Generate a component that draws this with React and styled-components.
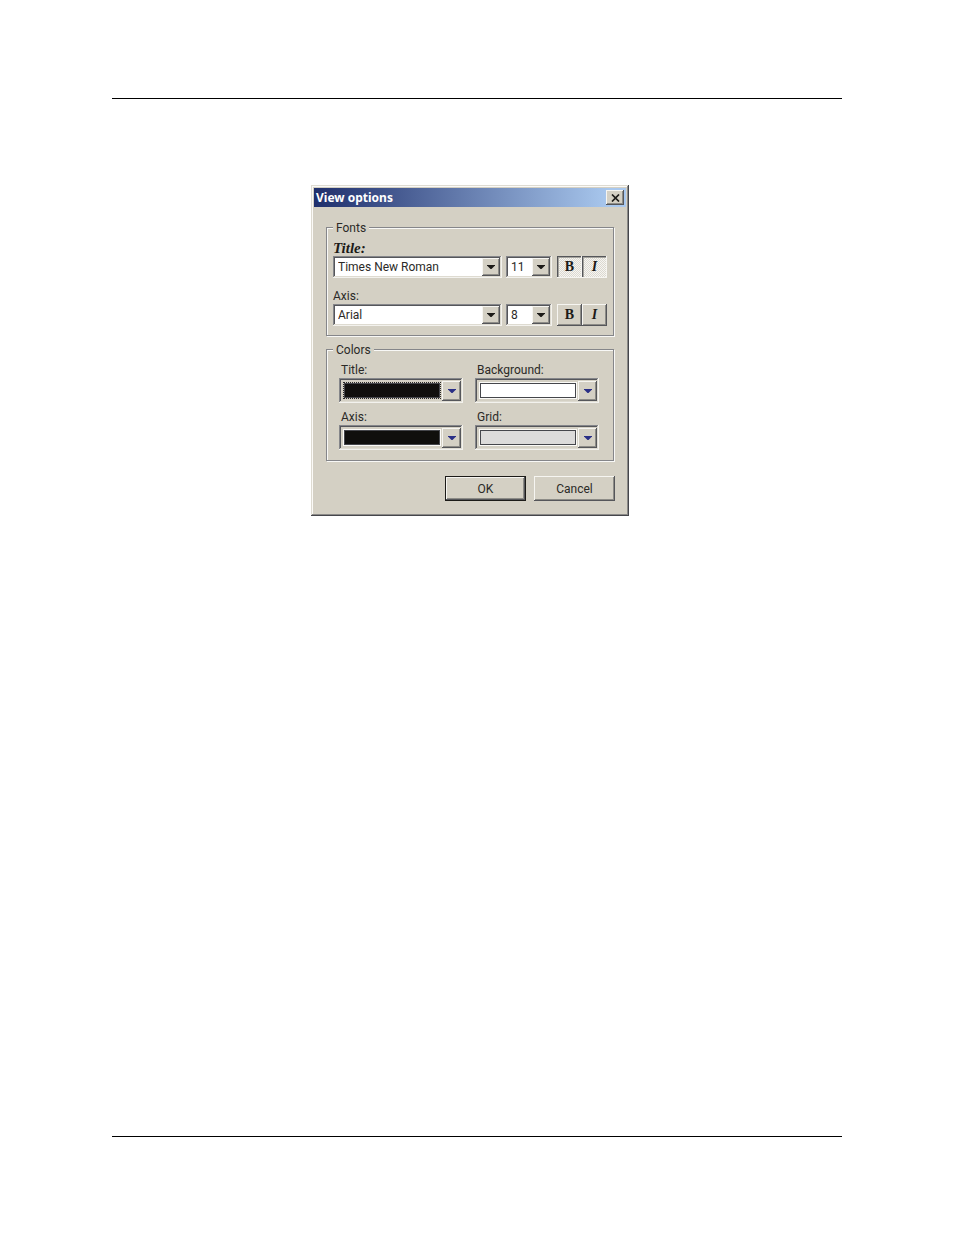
import React, { useState } from "react";
import styled, { createGlobalStyle, css } from "styled-components";

const swatches = [
  { value: "#100f0d", name: "Black" },
  { value: "#ffffff", name: "White" },
  { value: "#dcdbda", name: "Light gray" },
];

function Arrow({ color }) {
  return (
    <svg width="8" height="4" viewBox="0 0 8 4" aria-hidden="true">
      <path d="M0 0h8v0.5L4.5 4h-1L0 0.5z" fill={color} />
    </svg>
  );
}

function Combo({ label, options, initial, className }) {
  const [value, setValue] = useState(initial);

  return (
    <Combowrap className={className}>
      <select aria-label={label} value={value} onChange={(e) => setValue(e.target.value)}>
        {options.map((option) => (
          <option key={option}>{option}</option>
        ))}
      </select>
      <Arrowbox>
        <Arrow color="#1c1b18" />
      </Arrowbox>
    </Combowrap>
  );
}

function Toggle({ label, initial, italic, children }) {
  const [on, setOn] = useState(initial);

  return (
    <Togglebutton type="button" aria-label={label} aria-pressed={on} $on={on} $italic={italic} onClick={() => setOn(!on)}>
      {children}
    </Togglebutton>
  );
}

function FontRow({ name, font, size, on }) {
  return (
    <Fontrow>
      <Combo className="family" label={`${name} font`} options={["Times New Roman", "Arial"]} initial={font} />
      <Combo className="size" label={`${name} size`} options={["8", "11"]} initial={size} />
      <div className="toggles">
        <Toggle label={`${name} bold`} initial={on}>
          B
        </Toggle>
        <Toggle label={`${name} italic`} initial={on} italic>
          I
        </Toggle>
      </div>
    </Fontrow>
  );
}

function ColorField({ id, label, initial, focused }) {
  const [color, setColor] = useState(initial);

  return (
    <Colorfield>
      <label htmlFor={id}>{label}</label>
      <Colorcombo>
        <Swatch $color={color} $focused={focused} />
        <Arrowbox>
          <Arrow color="#2a2f86" />
        </Arrowbox>
        <select id={id} value={color} onChange={(e) => setColor(e.target.value)}>
          {swatches.map(({ value, name }) => (
            <option key={value} value={value} aria-label={name} />
          ))}
        </select>
      </Colorcombo>
    </Colorfield>
  );
}

function App() {
  return (
    <Page>
      <GlobalStyle />
      <Rule />
      <Content>
        <Dialog role="dialog" aria-labelledby="dialog-title">
          <Titlebar>
            <h1 id="dialog-title">View options</h1>
            <Closebutton type="button" aria-label="Close">
              <svg width="9" height="8" viewBox="0 0 9 8" aria-hidden="true">
                <path d="M1 0.5L8 7.5M8 0.5L1 7.5" stroke="#1c1b18" strokeWidth="1.7" />
              </svg>
            </Closebutton>
          </Titlebar>
          <Dialogbody>
            <Fontgroup>
              <legend>Fonts</legend>
              <Titlesample>Title:</Titlesample>
              <FontRow name="Title" font="Times New Roman" size="11" on={true} />
              <Axissample>Axis:</Axissample>
              <FontRow name="Axis" font="Arial" size="8" on={false} />
            </Fontgroup>
            <Colorgroup>
              <legend>Colors</legend>
              <div className="fields">
                <ColorField id="title-color" label="Title:" initial="#100f0d" focused />
                <ColorField id="background-color" label="Background:" initial="#ffffff" />
                <ColorField id="axis-color" label="Axis:" initial="#100f0d" />
                <ColorField id="grid-color" label="Grid:" initial="#dcdbda" />
              </div>
            </Colorgroup>
            <Actions>
              <Pushbutton type="button" $primary>
                OK
              </Pushbutton>
              <Pushbutton type="button">Cancel</Pushbutton>
            </Actions>
          </Dialogbody>
        </Dialog>
      </Content>
      <Rule />
    </Page>
  );
}

const raised = css`
  box-shadow:
    inset -1px -1px #55565a,
    inset 1px 1px #f6f5f1,
    inset -2px -2px #8d8c87;
`;

const sunken = css`
  box-shadow:
    inset -1px -1px #f3f2ee,
    inset 1px 1px #85868a,
    inset -2px -2px #dedbd1,
    inset 2px 2px #55565a;
`;

const pressed = css`
  box-shadow:
    inset -1px -1px #f6f5f1,
    inset 1px 1px #55565a,
    inset 2px 2px #a5a49e;
`;

const GlobalStyle = createGlobalStyle`
  * {
    box-sizing: border-box;
  }
  body {
    margin: 0;
    background: #fff;
    color: #2b2a27;
    font-family: Roboto, "Liberation Sans", sans-serif;
    font-size: 12px;
    line-height: 14px;
  }
  button, select {
    margin: 0;
    padding: 0;
    border: 0;
    border-radius: 0;
    color: inherit;
    font: inherit;
  }
`;

const Page = styled.div`
  display: flex;
  flex-direction: column;
  min-height: 100vh;
  padding: 98px 112px;
`;

const Rule = styled.hr`
  width: 100%;
  height: 1px;
  margin: 0;
  border: 0;
  background: #000;
`;

const Content = styled.main`
  display: flex;
  flex: 1;
  align-items: flex-start;
  justify-content: center;
  padding: 86px 14px 86px 0;
`;

const Dialog = styled.section`
  width: 100%;
  max-width: 318px;
  padding: 3px;
  background: #d4d0c4;
  box-shadow:
    inset -1px -1px #45464b,
    inset 1px 1px #dedbd2,
    inset -2px -2px #8b8a88,
    inset 2px 2px #fbfaf7;
`;

const Titlebar = styled.header`
  display: flex;
  align-items: center;
  justify-content: space-between;
  height: 19px;
  padding: 0 2px;
  background: linear-gradient(90deg, #1f2f6c 0%, #a9c8ee 95%);
  h1 {
    margin: 0;
    color: #fff;
    font-family: "Noto Sans", sans-serif;
    font-size: 12px;
    font-weight: 700;
    line-height: 18px;
  }
`;

const Closebutton = styled.button`
  display: grid;
  place-items: center;
  width: 18px;
  height: 15px;
  background: #d4d0c4;
  ${raised}
`;

const Dialogbody = styled.div`
  padding: 13px 11px 12px 12px;
`;

/* etched frame: grey line with a white one to its lower right */
const Group = styled.fieldset`
  min-width: 0;
  margin: 0 1px 0 0;
  border: 1px solid #85868a;
  box-shadow:
    1px 1px #f8f8f6,
    inset 1px 1px #f8f8f6;
  legend {
    padding: 1px 3px 0;
    background: #d4d0c4;
  }
`;

const Fontgroup = styled(Group)`
  padding: 5px 6px 9px;
`;

const Colorgroup = styled(Group)`
  margin-top: 6px;
  padding: 6px 14px 10px 12px;
  legend {
    margin-left: -6px;
  }
  .fields {
    display: grid;
    grid-template-columns: 1fr 1fr;
    gap: 7px 12px;
  }
`;

const Titlesample = styled.div`
  color: #1c1b18;
  font-family: "Liberation Serif", serif;
  font-size: 15px;
  font-style: italic;
  font-weight: 700;
  line-height: 16px;
`;

const Axissample = styled.div`
  margin-top: 11px;
  line-height: 15px;
`;

const Fontrow = styled.div`
  display: flex;
  .family {
    flex: 1;
    margin-right: 4px;
  }
  .size {
    width: 46px;
    margin-right: 5px;
  }
  .toggles {
    display: flex;
  }
`;

const Arrowbox = styled.span`
  display: grid;
  grid-area: 1 / 2;
  place-items: center;
  background: #d4d0c4;
  pointer-events: none;
  ${raised}
`;

const Combowrap = styled.div`
  display: grid;
  grid-template-columns: minmax(0, 1fr) 18px;
  height: 22px;
  padding: 2px;
  background: #fff;
  ${sunken}
  select {
    grid-area: 1 / 1 / 2 / 3;
    width: 100%;
    padding: 0 18px 0 3px;
    appearance: none;
    background: transparent;
    outline: none;
  }
`;

const Togglebutton = styled.button`
  width: 25px;
  height: 22px;
  background: ${(props) =>
    props.$on ? "repeating-conic-gradient(#f6f5f2 0 25%, #dcd9d0 0 50%) 0 0 / 2px 2px" : "#d4d0c4"};
  color: #1c1b18;
  font-family: "Liberation Serif", serif;
  font-size: 14px;
  font-style: ${(props) => (props.$italic ? "italic" : "normal")};
  font-weight: 700;
  ${(props) => (props.$on ? pressed : raised)}
`;

const Colorfield = styled.div`
  label {
    display: block;
    height: 15px;
    padding-left: 2px;
  }
`;

const Colorcombo = styled.div`
  display: grid;
  grid-template-columns: minmax(0, 1fr) 19px;
  column-gap: 1px;
  height: 25px;
  padding: 3px 2px 2px 4px;
  ${sunken}
  select {
    grid-area: 1 / 1 / 2 / 3;
    width: 100%;
    opacity: 0;
  }
`;

const Swatch = styled.span`
  grid-area: 1 / 1;
  height: 17px;
  margin-top: 1px;
  border: 1px ${(props) => (props.$focused ? "dotted #2b2a27" : "solid #fbfaf7")};
  background: ${(props) => props.$color};
  background-clip: padding-box;
  box-shadow: inset 0 0 0 1px #45464b;
`;

const Actions = styled.div`
  display: flex;
  justify-content: flex-end;
  gap: 8px;
  margin-top: 15px;
`;

const Pushbutton = styled.button`
  width: 81px;
  height: 25px;
  background: #d4d0c4;
  ${raised}
  ${(props) =>
    props.$primary &&
    css`
      border: 1px solid #1c1b18;
    `}
`;

export default App;
